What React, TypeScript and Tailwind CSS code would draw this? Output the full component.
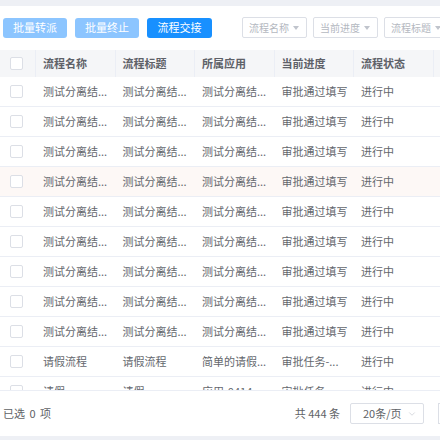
import { ChevronDown } from 'lucide-react';

type Row = {
  name: string;
  title: string;
  app: string;
  progress: string;
  status: string;
};

const sepRow: Row = {
  name: '测试分离结...',
  title: '测试分离结...',
  app: '测试分离结...',
  progress: '审批通过填写',
  status: '进行中',
};

const rows: Row[] = [
  ...Array.from({ length: 9 }, () => sepRow),
  { name: '请假流程', title: '请假流程', app: '简单的请假...', progress: '审批任务-...', status: '进行中' },
  { name: '请假', title: '请假', app: '应用-0414', progress: '审批任务-...', status: '进行中' },
];

const columns = ['流程名称', '流程标题', '所属应用', '当前进度', '流程状态', '发起人'];

function Checkbox() {
  return <span className="block h-[13px] w-[13px] rounded-[2px] border border-[#dcdfe6] bg-white" />;
}

function FilterSelect({ label }: { label: string }) {
  return (
    <div className="flex h-[21px] w-[65px] shrink-0 items-center justify-between rounded-[2px] border border-[#dcdfe6] bg-white pl-[6px] pr-[7px] text-[10px] text-[#b4b8bf]">
      <span>{label}</span>
      <span className="h-0 w-0 border-x-[3px] border-t-[4px] border-x-transparent border-t-[#c0c4cc]" />
    </div>
  );
}

export default function App() {
  return (
    <div
      className="flex h-[440px] w-[440px] flex-col overflow-hidden bg-[#eef0f5] pb-[4px] pt-[6px]"
      style={{ fontFamily: '"Noto Sans CJK SC", "Noto Sans", sans-serif' }}
    >
      <div className="flex min-h-0 flex-1 flex-col bg-white">
        {/* toolbar */}
        <div className="flex items-center pl-[3px] pt-[11px]">
          <div className="flex gap-[8px]">
            <button className="h-[20px] w-[64px] rounded-[3px] bg-[#8cc5ff] text-[11px] text-white">批量转派</button>
            <button className="h-[20px] w-[64px] rounded-[3px] bg-[#8cc5ff] text-[11px] text-white">批量终止</button>
            <button className="h-[20px] w-[65px] rounded-[3px] bg-[#1890ff] text-[11px] text-white">流程交接</button>
          </div>
          <div className="ml-[30px] flex gap-[6px]">
            <FilterSelect label="流程名称" />
            <FilterSelect label="当前进度" />
            <FilterSelect label="流程标题" />
          </div>
        </div>

        {/* table */}
        <div className="mt-[12px] min-h-0 flex-1 overflow-hidden">
          <div className="flex h-[27px] w-max bg-[#f5f6f8] text-[11px] font-bold text-[#5e6168]">
            <div className="flex w-[36px] items-center justify-center border-r border-[#ebeef5] pr-[3px]">
              <Checkbox />
            </div>
            {columns.map((c) => (
              <div key={c} className="flex w-[79.5px] items-center border-r border-[#ebeef5] pl-[7px]">
                {c}
              </div>
            ))}
          </div>
          {rows.map((r, i) => (
            <div
              key={i}
              className={`flex h-[30px] w-max border-b border-[#ebeef5] text-[11px] text-[#64676d] ${i === 3 ? 'bg-[#fdf8f6]' : 'bg-white'}`}
            >
              <div className="flex w-[36px] items-center justify-center pr-[3px]">
                <Checkbox />
              </div>
              {[r.name, r.title, r.app, r.progress, r.status, ''].map((v, j) => (
                <div key={j} className="flex w-[79.5px] items-center whitespace-nowrap pl-[7px]">
                  {v}
                </div>
              ))}
            </div>
          ))}
        </div>

        {/* footer */}
        <div className="flex h-[46px] shrink-0 items-center border-t border-[#ebeef5] pl-[3px] text-[11px] text-[#606266]">
          <span className="[word-spacing:2px]">已选 0 项</span>
          <span className="ml-auto">共 444 条</span>
          <div className="ml-[10px] flex h-[21px] w-[74px] items-center justify-between rounded-[2px] border border-[#dcdfe6] pl-[12px] pr-[6px]">
            <span>20条/页</span>
            <ChevronDown className="h-[10px] w-[10px] text-[#c0c4cc]" strokeWidth={1.5} />
          </div>
          <div className="ml-[14px] h-[21px] w-[2px] shrink-0 border-y border-l border-[#dcdfe6]" />
        </div>
      </div>
    </div>
  );
}
